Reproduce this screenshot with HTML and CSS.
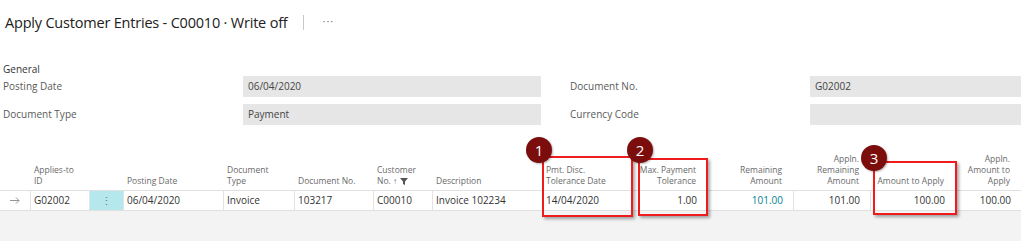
FILE: index.html
```html
<!DOCTYPE html>
<html lang="en">
<head>
  <meta charset="UTF-8">
  <title>Apply Customer Entries</title>
  <link rel="stylesheet" href="styles.css">
</head>
<body>

<div class="page">
  <header class="title-bar">
    <h1>Apply Customer Entries - C00010 · Write off</h1>
    <span class="divider"></span>
    <span class="more">···</span>
  </header>

  <!-- ========= GENERAL ========= -->
  <section class="general">
    <div class="caption">General</div>
    <div class="fields">
      <div class="label">Posting Date</div>
      <div class="value">06/04/2020</div>
      <div class="label">Document No.</div>
      <div class="value">G02002</div>

      <div class="label">Document Type</div>
      <div class="value">Payment</div>
      <div class="label">Currency Code</div>
      <div class="value"></div>
    </div>
  </section>

  <!-- ========= LINES ========= -->
  <section class="lines">
    <div class="grid head">
      <div class="hc"></div>
      <div class="hc">Applies-to<br>ID</div>
      <div class="hc"></div>
      <div class="hc">Posting Date</div>
      <div class="hc">Document<br>Type</div>
      <div class="hc">Document No.</div>
      <div class="hc">Customer<br>No. <span class="sort">↑</span>
        <svg class="funnel" width="8" height="7" viewBox="0 0 8 7"><path d="M0 0h8L5 3.5V7L3 6V3.5z" fill="#555"/></svg>
      </div>
      <div class="hc">Description</div>
      <div class="hc">Pmt. Disc.<br>Tolerance Date</div>
      <div class="hc num">Max. Payment<br>Tolerance</div>
      <div class="hc num">Remaining<br>Amount</div>
      <div class="hc num">Appln.<br>Remaining<br>Amount</div>
      <div class="hc num">Amount to Apply</div>
      <div class="hc num">Appln.<br>Amount to<br>Apply</div>
    </div>

    <div class="grid row">
      <div class="c arrow">
        <svg width="10" height="7" viewBox="0 0 10 7"><path d="M0 3.5h9M6 0.5l3 3-3 3" fill="none" stroke="#8a8a8a" stroke-width="0.9"/></svg>
      </div>
      <div class="c">G02002</div>
      <div class="c dots">⋮</div>
      <div class="c">06/04/2020</div>
      <div class="c">Invoice</div>
      <div class="c">103217</div>
      <div class="c">C00010</div>
      <div class="c">Invoice 102234</div>
      <div class="c">14/04/2020</div>
      <div class="c num">1.00</div>
      <div class="c num link">101.00</div>
      <div class="c num">101.00</div>
      <div class="c num">100.00</div>
      <div class="c num">100.00</div>
    </div>

    <div class="filler"></div>

    <!-- callouts -->
    <div class="mark mark-1"></div>
    <div class="mark mark-2"></div>
    <div class="mark mark-3"></div>
    <div class="badge badge-1">1</div>
    <div class="badge badge-2">2</div>
    <div class="badge badge-3">3</div>
  </section>
</div>

</body>
</html>
```

FILE: styles.css
```css
/* ---------- base ---------- */
html, body {
  margin: 0;
  padding: 0;
  background: #ffffff;
  color: #212121;
  font-family: "Open Sans", "Noto Sans", sans-serif;
}

.page { width: 1021px; height: 241px; overflow: hidden; }

/* ---------- title ---------- */
.title-bar { height: 45px; display: flex; align-items: center; padding-left: 5px; }
.title-bar h1 { margin: 0; font-size: 14.5px; font-weight: 400; color: #212121; letter-spacing: -0.2px; }
.divider { width: 1px; height: 15px; background: #c8c8c8; margin-left: 15px; }
.more { margin-left: 19px; font-size: 11px; color: #777; letter-spacing: 1px; position: relative; top: -2px; }

/* ---------- general ---------- */
.general { padding-left: 3px; }
.caption { padding-top: 18px; height: 13px; line-height: 13px; font-size: 10px; color: #333; }
.fields {
  display: grid;
  grid-template-columns: 240px 298px 29px 240px 1fr;
  grid-auto-rows: 21px;
  row-gap: 7px;
  font-size: 10px;
  line-height: 21px;
}
.fields .label { color: #5a5a5a; }
.fields .value { background: #e6e6e6; color: #444; padding-left: 5px; }
.fields .label:nth-child(4n+3) { grid-column: 4; }

/* ---------- lines ---------- */
.lines { position: relative; margin-top: 15px; }

.grid {
  display: grid;
  grid-template-columns: 30px 59px 34px 100px 71px 79px 59px 110px 90px 75px 86px 77px 85px 66px;
}

.head { height: 50px; align-items: end; }
.hc { font-size: 8.5px; line-height: 11px; color: #6a6a6a; padding: 0 4px 4px; }
.hc.num { text-align: right; padding-right: 11px; }
.sort { font-size: 8px; }
.funnel { vertical-align: -1px; margin-left: 1px; }

.row { border-top: 1px solid #e0e0e0; border-bottom: 1px solid #e0e0e0; height: 19px; }
.c {
  font-size: 10px;
  line-height: 19px;
  padding: 0 3px;
  color: #333;
  border-left: 1px solid #e3e3e3;
  white-space: nowrap;
}
.c.num { text-align: right; padding-right: 10px; }
.c.link { color: #00838f; }
.c.arrow { border-left: 0; display: flex; align-items: center; justify-content: center; }
.c.dots { background: #b5e8ec; text-align: center; color: #777; font-size: 11px; }

.filler { height: 30px; background: #f3f3f3; }

/* ---------- callouts ---------- */
.mark {
  position: absolute;
  border: 2px solid #ee1c1c;
  box-shadow: 2px 2px 3px rgba(0, 0, 0, 0.35);
  box-sizing: border-box;
}
.mark-1 { left: 542px; top: 16px; width: 91px; height: 61px; }
.mark-2 { left: 638px; top: 18px; width: 70px; height: 58px; }
.mark-3 { left: 873px; top: 21px; width: 84px; height: 54px; }

.badge {
  position: absolute;
  width: 26px;
  height: 26px;
  border-radius: 50%;
  background: #7b0d0d;
  color: #ffffff;
  font-size: 15px;
  line-height: 26px;
  text-align: center;
  box-shadow: 1px 1px 2px rgba(0, 0, 0, 0.3);
}
.badge-1 { left: 526px; top: -3px; }
.badge-2 { left: 627px; top: -3px; }
.badge-3 { left: 861px; top: 5px; }
```
